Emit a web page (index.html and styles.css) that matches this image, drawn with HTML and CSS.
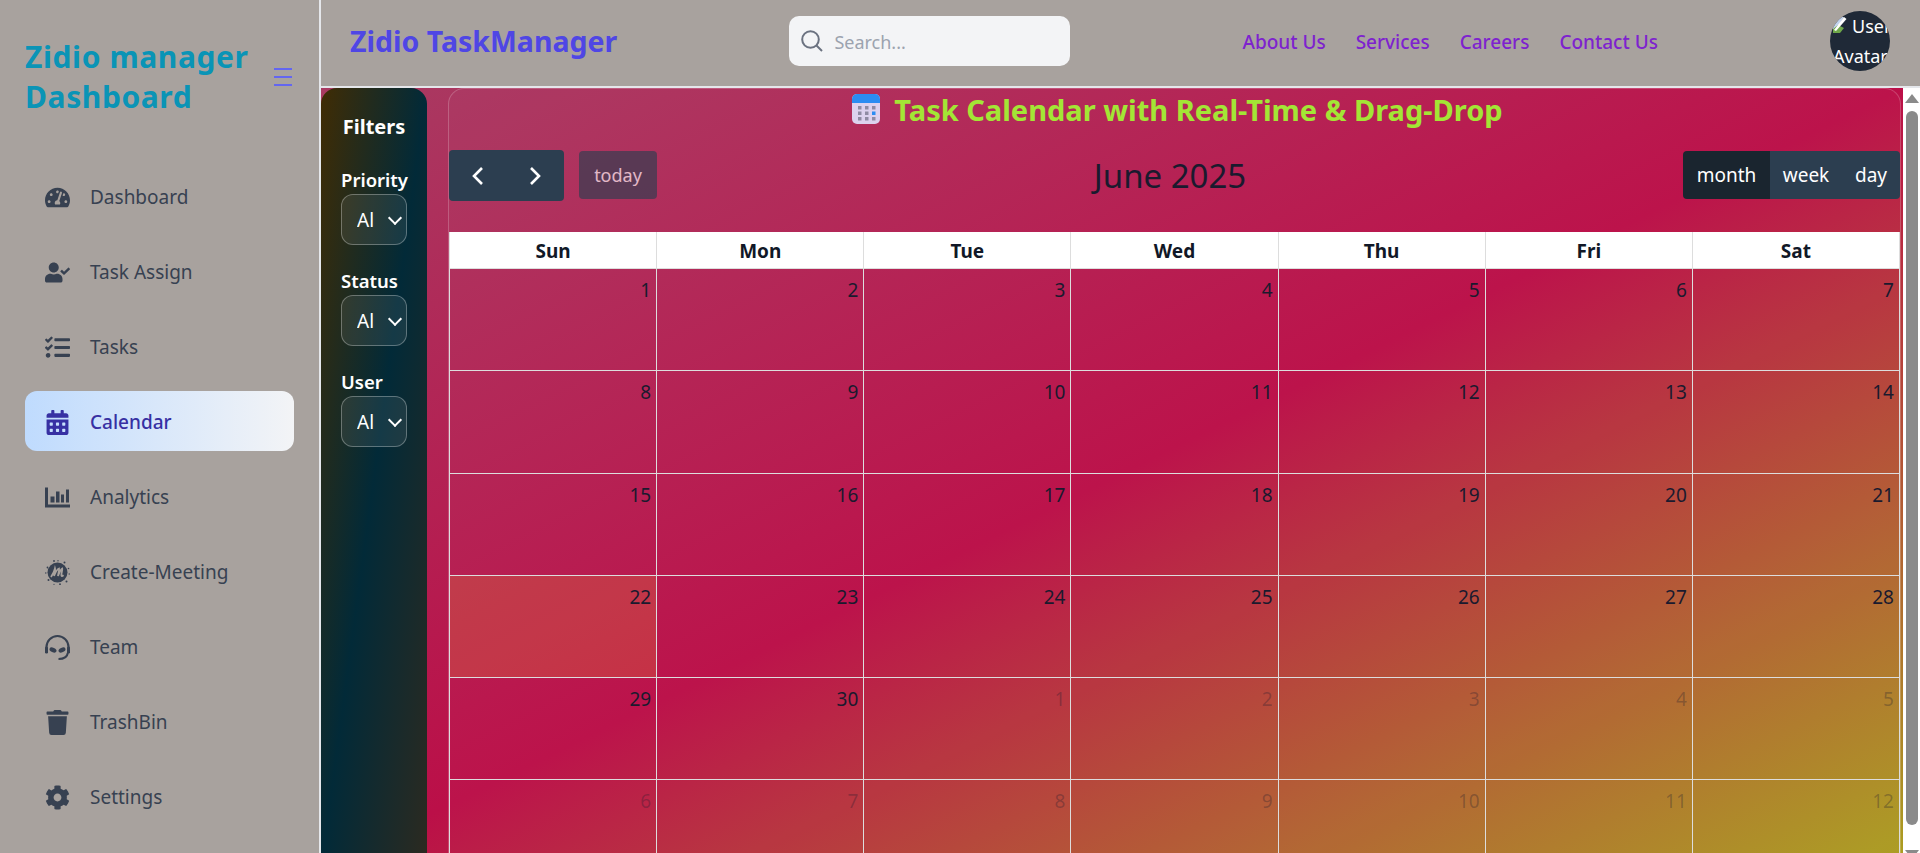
FILE: index.html
```html
<!DOCTYPE html>
<html lang="en">
<head>
<meta charset="UTF-8">
<meta name="viewport" content="width=device-width, initial-scale=1.0">
<title>Zidio Task Calendar</title>
<link rel="stylesheet" href="styles.css">
</head>
<body>

<div class="app">
    <aside class="sidebar">
        <div class="brand">
            <h1>Zidio manager Dashboard</h1>
            <svg class="burger" viewBox="0 0 18 18"><path d="M0 1h18M0 9h18M0 17h18"/></svg>
        </div>
        <nav class="nav">
            <a class="nav-item">
                <svg class="nav-icon" viewBox="0 0 576 512"><path d="M288 32C128.94 32 0 160.94 0 320c0 52.8 14.25 102.26 39.06 144.8 5.61 9.62 16.3 15.2 27.44 15.2h443c11.14 0 21.83-5.58 27.44-15.2C561.75 422.26 576 372.8 576 320c0-159.06-128.94-288-288-288zm0 64c14.71 0 26.58 10.13 30.32 23.65-1.11 2.26-2.64 4.23-3.45 6.67l-9.22 27.67c-5.13 3.49-10.97 6.01-17.64 6.01-17.67 0-32-14.33-32-32S270.33 96 288 96zM96 384c-17.67 0-32-14.33-32-32s14.33-32 32-32 32 14.33 32 32-14.33 32-32 32zm48-160c-17.67 0-32-14.33-32-32s14.33-32 32-32 32 14.33 32 32-14.33 32-32 32zm246.77-72.41l-61.33 184C343.13 347.33 352 364.54 352 384c0 11.72-3.38 22.55-8.88 32H232.88c-5.5-9.45-8.88-20.28-8.88-32 0-33.94 26.5-61.43 59.9-63.59l61.34-184.01c4.17-12.56 17.73-19.45 30.36-15.17 12.57 4.19 19.35 17.79 15.17 30.36zm14.66 57.2l15.52-46.55c3.47-1.29 7.13-2.23 11.05-2.23 17.67 0 32 14.33 32 32s-14.33 32-32 32c-11.38-.01-20.89-6.28-26.57-15.22zM480 384c-17.67 0-32-14.33-32-32s14.33-32 32-32 32 14.33 32 32-14.33 32-32 32z"/></svg>
                <span>Dashboard</span>
            </a>
            <a class="nav-item">
                <svg class="nav-icon" viewBox="0 0 640 512"><path d="M224 256c70.7 0 128-57.3 128-128S294.7 0 224 0 96 57.3 96 128s57.3 128 128 128zm89.6 32h-16.7c-22.2 10.2-46.9 16-72.9 16s-50.6-5.8-72.9-16h-16.7C60.2 288 0 348.2 0 422.4V464c0 26.5 21.5 48 48 48h352c26.5 0 48-21.5 48-48v-41.6c0-74.2-60.2-134.4-134.4-134.4zm323-128.4l-27.8-28.1c-4.6-4.7-12.1-4.7-16.8-.1l-104.8 104-45.5-45.8c-4.6-4.7-12.1-4.7-16.8-.1l-28.1 27.9c-4.7 4.6-4.7 12.1-.1 16.8l81.7 82.3c4.6 4.7 12.1 4.7 16.8.1l141.3-140.2c4.6-4.7 4.7-12.2.1-16.8z"/></svg>
                <span>Task Assign</span>
            </a>
            <a class="nav-item">
                <svg class="nav-icon" viewBox="0 0 512 512"><path d="M139.61 35.5a12 12 0 0 0-17 0L58.93 98.81l-22.7-22.12a12 12 0 0 0-17 0L3.53 92.41a12 12 0 0 0 0 17l47.59 47.4a12.78 12.78 0 0 0 17.61 0l15.59-15.62L156.52 69a12.09 12.09 0 0 0 .09-17zm0 159.19a12 12 0 0 0-17 0l-63.68 63.72-22.7-22.1a12 12 0 0 0-17 0L3.53 252a12 12 0 0 0 0 17L51 316.5a12.77 12.77 0 0 0 17.6 0l15.7-15.69 72.2-72.22a12 12 0 0 0 .09-16.9zM64 368c-26.49 0-48.59 21.5-48.59 48S37.53 464 64 464a48 48 0 0 0 0-96zm432 16H208a16 16 0 0 0-16 16v32a16 16 0 0 0 16 16h288a16 16 0 0 0 16-16v-32a16 16 0 0 0-16-16zm0-320H208a16 16 0 0 0-16 16v32a16 16 0 0 0 16 16h288a16 16 0 0 0 16-16V80a16 16 0 0 0-16-16zm0 160H208a16 16 0 0 0-16 16v32a16 16 0 0 0 16 16h288a16 16 0 0 0 16-16v-32a16 16 0 0 0-16-16z"/></svg>
                <span>Tasks</span>
            </a>
            <a class="nav-item active">
                <svg class="nav-icon" viewBox="0 0 448 512"><path d="M0 464c0 26.5 21.5 48 48 48h352c26.5 0 48-21.5 48-48V192H0v272zm320-196c0-6.6 5.4-12 12-12h40c6.6 0 12 5.4 12 12v40c0 6.6-5.4 12-12 12h-40c-6.6 0-12-5.4-12-12v-40zm0 128c0-6.6 5.4-12 12-12h40c6.6 0 12 5.4 12 12v40c0 6.6-5.4 12-12 12h-40c-6.6 0-12-5.4-12-12v-40zM192 268c0-6.6 5.4-12 12-12h40c6.6 0 12 5.4 12 12v40c0 6.6-5.4 12-12 12h-40c-6.6 0-12-5.4-12-12v-40zm0 128c0-6.6 5.4-12 12-12h40c6.6 0 12 5.4 12 12v40c0 6.6-5.4 12-12 12h-40c-6.6 0-12-5.4-12-12v-40zM64 268c0-6.6 5.4-12 12-12h40c6.6 0 12 5.4 12 12v40c0 6.6-5.4 12-12 12H76c-6.6 0-12-5.4-12-12v-40zm0 128c0-6.6 5.4-12 12-12h40c6.6 0 12 5.4 12 12v40c0 6.6-5.4 12-12 12H76c-6.6 0-12-5.4-12-12v-40zM400 64h-48V16c0-8.8-7.2-16-16-16h-32c-8.8 0-16 7.2-16 16v48H160V16c0-8.8-7.2-16-16-16h-32c-8.8 0-16 7.2-16 16v48H48C21.5 64 0 85.5 0 112v48h448v-48c0-26.5-21.5-48-48-48z"/></svg>
                <span>Calendar</span>
            </a>
            <a class="nav-item">
                <svg class="nav-icon" viewBox="0 0 25 20"><path d="M0 0h3v17h22v3H0z"/><rect x="5.5" y="9" width="4" height="6"/><rect x="11" y="4" width="3.5" height="11"/><rect x="16" y="7" width="3" height="8"/><rect x="21" y="2" width="3" height="13"/></svg>
                <span>Analytics</span>
            </a>
            <a class="nav-item">
                <svg class="nav-icon" viewBox="0 0 25 25">
                    <circle cx="12.5" cy="12.5" r="10"/>
                    <circle cx="2.500" cy="7.500" r=".9"/><circle cx="0.800" cy="13" r=".7"/><circle cx="3.500" cy="20" r="1"/><circle cx="9" cy="1" r=".9"/><circle cx="13" cy="0.700" r=".7"/><circle cx="19.500" cy="2.500" r="1"/><circle cx="23.500" cy="8.500" r=".8"/><circle cx="24.200" cy="14" r=".7"/><circle cx="21.500" cy="21.500" r="1"/><circle cx="15" cy="24.200" r=".9"/><circle cx="9" cy="24.300" r=".6"/>
                    <path class="meetup-m" d="M6 17C8 14 9.500 10.500 10 8.500c.6 2-.6 5-1 7.500 1.200-3 3.400-7 5-7.500.5 2-.8 5.300-1 7.500 1-2.500 3-7 4.200-7.500.4 2-1.200 5.300-.8 7 .2.800 1.200.6 2.200-.2"/>
                </svg>
                <span>Create-Meeting</span>
            </a>
            <a class="nav-item">
                <svg class="nav-icon" viewBox="0 0 25 25">
                    <path class="headset" d="M1.500 15V12a11 11 0 0 1 22 0v3"/>
                    <rect x="0" y="11.500" width="3" height="7" rx="1.300"/><rect x="22" y="11.500" width="3" height="7" rx="1.300"/>
                    <ellipse cx="8" cy="15" rx="3.700" ry="2.200" transform="rotate(25 8 15)"/><ellipse cx="17" cy="15" rx="3.700" ry="2.200" transform="rotate(-25 17 15)"/>
                    <path class="headset" d="M22.800 18c-.5 3.800-3.500 6-9.300 6"/>
                </svg>
                <span>Team</span>
            </a>
            <a class="nav-item">
                <svg class="nav-icon" viewBox="0 0 448 512"><path d="M432 32H312l-9.400-18.700A24 24 0 0 0 281.100 0H166.800a23.720 23.720 0 0 0-21.400 13.300L136 32H16A16 16 0 0 0 0 48v32a16 16 0 0 0 16 16h416a16 16 0 0 0 16-16V48a16 16 0 0 0-16-16zM53.200 467a48 48 0 0 0 47.900 45h245.800a48 48 0 0 0 47.900-45L416 128H32z"/></svg>
                <span>TrashBin</span>
            </a>
            <a class="nav-item">
                <svg class="nav-icon" viewBox="0 0 512 512"><path d="M487.400 315.700l-42.600-24.600c4.300-23.200 4.300-47 0-70.200l42.600-24.600c4.900-2.800 7.100-8.600 5.500-14-11.100-35.600-30-67.800-54.700-94.600-3.800-4.100-10-5.100-14.800-2.300L380.800 110c-17.900-15.400-38.500-27.300-60.800-35.100V25.800c0-5.600-3.900-10.500-9.400-11.700-36.700-8.200-74.300-7.800-109.200 0-5.500 1.200-9.400 6.100-9.400 11.700V75c-22.200 7.900-42.800 19.800-60.800 35.100L88.700 85.500c-4.900-2.800-11-1.900-14.800 2.300-24.700 26.700-43.600 58.900-54.700 94.600-1.700 5.400.6 11.200 5.500 14L67.300 221c-4.300 23.200-4.300 47 0 70.200l-42.600 24.600c-4.900 2.800-7.100 8.600-5.500 14 11.100 35.600 30 67.800 54.700 94.600 3.800 4.100 10 5.100 14.800 2.300l42.600-24.600c17.900 15.400 38.500 27.300 60.800 35.100v49.200c0 5.600 3.900 10.500 9.400 11.700 36.700 8.200 74.300 7.800 109.200 0 5.500-1.200 9.400-6.100 9.400-11.700v-49.200c22.200-7.900 42.800-19.800 60.800-35.100l42.600 24.600c4.900 2.800 11 1.900 14.800-2.300 24.700-26.700 43.600-58.900 54.700-94.600 1.500-5.500-.7-11.300-5.600-14.100zM256 336c-44.100 0-80-35.900-80-80s35.900-80 80-80 80 35.900 80 80-35.900 80-80 80z"/></svg>
                <span>Settings</span>
            </a>
        </nav>
    </aside>

    <header class="topbar">
        <div class="logo">Zidio TaskManager</div>
        <div class="search">
            <svg class="search-icon" viewBox="0 0 22 22"><circle cx="9.500" cy="9.500" r="8.300"/><path d="M15.500 15.500l5.500 5.500"/></svg>
            <input type="text" placeholder="Search...">
        </div>
        <div class="top-links">
            <a>About Us</a>
            <a>Services</a>
            <a>Careers</a>
            <a>Contact Us</a>
        </div>
        <div class="avatar">
            <svg class="broken-img" viewBox="0 0 16 16"><path fill="#c3d4ee" d="M0 0h11L3 12H0z"/><path fill="#6fa84a" d="M0 12l5-4 6 3-4 5H0z"/><path fill="#fff" d="M11 0l2.500 2L3 14l-2-1z"/></svg>User<br>Avatar
        </div>
    </header>

    <div class="main-area">
        <main class="content">
            <section class="filters">
                <h3>Filters</h3>
                <div class="filter-group">
                    <label for="priority">Priority</label>
                    <div class="select-wrap"><select id="priority"><option>All</option></select></div>
                </div>
                <div class="filter-group">
                    <label for="status">Status</label>
                    <div class="select-wrap"><select id="status"><option>All</option></select></div>
                </div>
                <div class="filter-group">
                    <label for="user">User</label>
                    <div class="select-wrap"><select id="user"><option>All</option></select></div>
                </div>
            </section>

            <section class="calendar">
                <h2 class="cal-title">
                    <svg class="cal-emoji" viewBox="0 0 28 30">
                        <rect width="28" height="30" rx="5" fill="#dcd2ee"/>
                        <path d="M0 9V5a5 5 0 0 1 5-5h18a5 5 0 0 1 5 5v4z" fill="#2b8cf2"/>
                        <g fill="#8f8ba3">
                            <rect x="6" y="12" width="3.500" height="3.500"/><rect x="13" y="12" width="3.500" height="3.500"/><rect x="20" y="12" width="3.500" height="3.500"/>
                            <rect x="6" y="17.500" width="3.500" height="3.500"/><rect x="13" y="17.500" width="3.500" height="3.500"/><rect x="20" y="17.500" width="3.500" height="3.500" fill="#2b8cf2"/>
                            <rect x="6" y="23" width="3.500" height="3.500"/><rect x="13" y="23" width="3.500" height="3.500"/><rect x="20" y="23" width="3.500" height="3.500"/>
                        </g>
                    </svg>
                    Task Calendar with Real-Time &amp; Drag-Drop
                </h2>

                <div class="toolbar">
                    <div class="tool-left">
                        <div class="arrows">
                            <button class="arrow"><svg viewBox="0 0 14 20"><path d="M11 2l-8 8 8 8"/></svg></button>
                            <button class="arrow"><svg viewBox="0 0 14 20"><path d="M3 2l8 8-8 8"/></svg></button>
                        </div>
                        <button class="today">today</button>
                    </div>
                    <div class="month-title">June 2025</div>
                    <div class="views">
                        <button class="view current">month</button>
                        <button class="view">week</button>
                        <button class="view">day</button>
                    </div>
                </div>

                <div class="week-head">
                    <div>Sun</div><div>Mon</div><div>Tue</div><div>Wed</div><div>Thu</div><div>Fri</div><div>Sat</div>
                </div>
                <div class="month-grid">
                    <div class="day">1</div><div class="day">2</div><div class="day">3</div><div class="day">4</div><div class="day">5</div><div class="day">6</div><div class="day">7</div>
                    <div class="day">8</div><div class="day">9</div><div class="day">10</div><div class="day">11</div><div class="day">12</div><div class="day">13</div><div class="day">14</div>
                    <div class="day">15</div><div class="day">16</div><div class="day">17</div><div class="day">18</div><div class="day">19</div><div class="day">20</div><div class="day">21</div>
                    <div class="day today-cell">22</div><div class="day">23</div><div class="day">24</div><div class="day">25</div><div class="day">26</div><div class="day">27</div><div class="day">28</div>
                    <div class="day">29</div><div class="day">30</div><div class="day other">1</div><div class="day other">2</div><div class="day other">3</div><div class="day other">4</div><div class="day other">5</div>
                    <div class="day other">6</div><div class="day other">7</div><div class="day other">8</div><div class="day other">9</div><div class="day other">10</div><div class="day other">11</div><div class="day other">12</div>
                </div>
            </section>
        </main>

        <div class="scrollbar">
            <span class="scroll-up"></span>
            <span class="scroll-thumb"></span>
            <span class="scroll-down"></span>
        </div>
    </div>
</div>

</body>
</html>
```

FILE: styles.css
```css
* {
    box-sizing: border-box;
}
body {
    margin: 0;
    font-family: "Noto Sans", sans-serif;
    font-size: 19px;
    background-color: #fff;
}
.app {
    display: grid;
    grid-template-columns: 321px 1fr;
    grid-template-rows: 88px 1fr;
    height: 100vh;
    overflow: hidden;
}

/* Sidebar */
.sidebar {
    grid-row: 1 / 3;
    background-color: #a8a29e;
    border-right: 2px solid #e5e7eb;
    padding: 37px 25px 0;
}
.brand {
    display: flex;
    align-items: center;
    justify-content: space-between;
    margin-bottom: 49px;
    padding-right: 2px;
}
.brand h1 {
    margin: 0;
    width: 240px;
    color: #0a94b6;
    font-size: 30px;
    font-weight: 700;
    line-height: 40px;
    letter-spacing: 0.6px;
}
.burger {
    width: 18px;
    height: 18px;
    flex: none;
}
.burger path {
    stroke: #6366f1;
    stroke-width: 2;
    fill: none;
}
.nav {
    display: flex;
    flex-direction: column;
    gap: 15px;
}
.nav-item {
    display: flex;
    align-items: center;
    gap: 20px;
    height: 60px;
    padding: 2px 0 0 20px;
    color: #374151;
    border-radius: 12px;
}
.nav-item.active {
    color: #3730a3;
    font-weight: 500;
    background: linear-gradient(to right, #bfdbfe, #f3f4f6);
}
.nav-icon {
    width: 25px;
    height: 25px;
    flex: none;
    fill: currentColor;
}
.meetup-m {
    fill: none;
    stroke: #a8a29e;
    stroke-width: 1.800;
}
.headset {
    fill: none;
    stroke: currentColor;
    stroke-width: 2;
}

/* Top bar */
.topbar {
    display: flex;
    align-items: center;
    justify-content: space-between;
    background-color: #a8a29e;
    border-bottom: 2px solid #e5e7eb;
    padding: 0 30px 4px 29px;
}
.logo {
    color: #4f46e5;
    font-size: 28.500px;
    font-weight: 700;
}
.search {
    display: flex;
    align-items: center;
    gap: 11px;
    width: 281px;
    height: 50px;
    padding-left: 12px;
    background-color: #f3f4f6;
    border-radius: 10px;
}
.search-icon {
    width: 22px;
    height: 22px;
    flex: none;
}
.search-icon circle,
.search-icon path {
    fill: none;
    stroke: #6b7280;
    stroke-width: 2;
}
.search input {
    width: 200px;
    border: none;
    outline: none;
    background: none;
    font-family: inherit;
    font-size: 18px;
    padding: 2px 0 0;
}
.search input::placeholder {
    color: #9ca3af;
}
.top-links {
    display: flex;
    gap: 30px;
    padding-top: 2px;
    color: #7e22ce;
    font-weight: 500;
}
.avatar {
    width: 60px;
    height: 60px;
    flex: none;
    border-radius: 50%;
    background-color: #1f2937;
    color: #fff;
    font-size: 18px;
    overflow: hidden;
    line-height: 30px;
    padding-left: 3px;
    white-space: nowrap;
}
.broken-img {
    display: inline-block;
    width: 16px;
    height: 16px;
    vertical-align: 0;
    margin-right: 3px;
}

/* Main */
.main-area {
    display: flex;
    min-height: 0;
    overflow: hidden;
}
.content {
    flex: 1;
    min-width: 0;
    display: flex;
    gap: 21px;
    height: 780px;
    overflow: hidden;
    padding-right: 2px;
    background: linear-gradient(to bottom right, #a93a62, #bb0f48 50%, #ab9f20);
}

/* Scroll rail, the page shot has the browser's one in view */
.scrollbar {
    flex: none;
    width: 17px;
    display: flex;
    flex-direction: column;
    align-items: center;
    padding-top: 6px;
    background-color: #fff;
}
.scroll-up {
    width: 0;
    height: 0;
    border-left: 7px solid transparent;
    border-right: 7px solid transparent;
    border-bottom: 9px solid #8a8a8a;
}
.scroll-thumb {
    flex: none;
    width: 12px;
    height: 714px;
    margin: 8px 0 25px;
    border-radius: 6px;
    background-color: #8a8a8a;
}
.scroll-down {
    width: 0;
    height: 0;
    border-left: 7px solid transparent;
    border-right: 7px solid transparent;
    border-top: 9px solid #8a8a8a;
}

/* Filters panel */
.filters {
    flex: none;
    width: 106px;
    padding: 24px 20px 0;
    color: #fff;
    border-radius: 16px 16px 0 0;
    background: linear-gradient(to bottom right, #402c04, #022a38, #2c2a20);
}
.filters h3 {
    margin: 0 0 23px;
    font-size: 20px;
    font-weight: 700;
    line-height: 30px;
    text-align: center;
}
.filter-group {
    margin-bottom: 21px;
}
.filter-group label {
    display: block;
    font-size: 18.500px;
    font-weight: 600;
    line-height: 29px;
}
.select-wrap {
    position: relative;
    width: 66px;
}
.select-wrap::after {
    content: "";
    position: absolute;
    top: 19px;
    right: 7px;
    width: 8px;
    height: 8px;
    border-right: 2px solid #fff;
    border-bottom: 2px solid #fff;
    transform: rotate(45deg);
    pointer-events: none;
}
.select-wrap select {
    display: block;
    width: 66px;
    height: 51px;
    padding: 0 31px 0 15px;
    appearance: none;
    color: #fff;
    font-family: inherit;
    font-size: 19px;
    background-color: rgba(255, 255, 255, 0.08);
    border: 1px solid rgba(255, 255, 255, 0.3);
    border-radius: 12px;
}

/* Calendar */
.calendar {
    flex: 1;
    min-width: 0;
    border: 1px solid rgba(255, 255, 255, 0.2);
    border-bottom: none;
    border-radius: 16px 16px 0 0;
    background-color: rgba(255, 255, 255, 0.02);
}
.cal-title {
    display: flex;
    align-items: center;
    justify-content: center;
    gap: 14px;
    height: 40px;
    margin: 0 0 21px;
    padding-left: 6px;
    color: #a3e635;
    font-size: 29px;
    font-weight: 700;
}
.cal-emoji {
    width: 28px;
    height: 30px;
    flex: none;
}
.toolbar {
    display: flex;
    align-items: flex-start;
    justify-content: space-between;
    height: 51px;
    margin-bottom: 31px;
}
.tool-left {
    display: flex;
    align-items: flex-start;
    gap: 15px;
}
.toolbar button {
    font-family: inherit;
    font-size: 19px;
    color: #fff;
    border: none;
    background-color: #2c3e50;
    padding: 0;
}
.arrows {
    display: flex;
    height: 51px;
    border-radius: 4px;
    overflow: hidden;
}
.toolbar .arrow {
    display: flex;
    align-items: center;
    justify-content: center;
    width: 57.500px;
}
.arrow svg {
    width: 14px;
    height: 20px;
}
.arrow path {
    fill: none;
    stroke: #fff;
    stroke-width: 2.600;
}
.toolbar .today {
    width: 78px;
    height: 48px;
    margin-top: 1px;
    font-size: 18px;
    border-radius: 4px;
    opacity: 0.65;
}
.month-title {
    color: #1a1a2e;
    font-size: 33px;
    line-height: 51px;
}
.views {
    display: flex;
    height: 48px;
    margin-top: 1px;
    border-radius: 4px;
    overflow: hidden;
}
.toolbar .view {
    width: 72px;
}
.toolbar .view.current {
    width: 87px;
    background-color: #1a252f;
}
.toolbar .view:last-child {
    width: 58px;
}
.week-head,
.month-grid {
    display: grid;
    grid-template-columns: repeat(7, 1fr);
}
.week-head {
    height: 37px;
    background-color: #fff;
    color: #111827;
    font-weight: 700;
    text-align: center;
    line-height: 38px;
    border-left: 1px solid #ddd;
    border-bottom: 1px solid #ddd;
}
.week-head div {
    border-right: 1px solid #ddd;
}
.month-grid {
    grid-auto-rows: 102.300px;
    color: #1a1a2e;
    border-left: 1px solid #ddd;
}
.day {
    text-align: right;
    padding: 8px 5px 0 0;
    border-right: 1px solid #ddd;
    border-bottom: 1px solid #ddd;
}
.day.other {
    color: rgba(26, 26, 46, 0.3);
}
.day.today-cell {
    background-color: rgba(255, 220, 40, 0.15);
}
```
